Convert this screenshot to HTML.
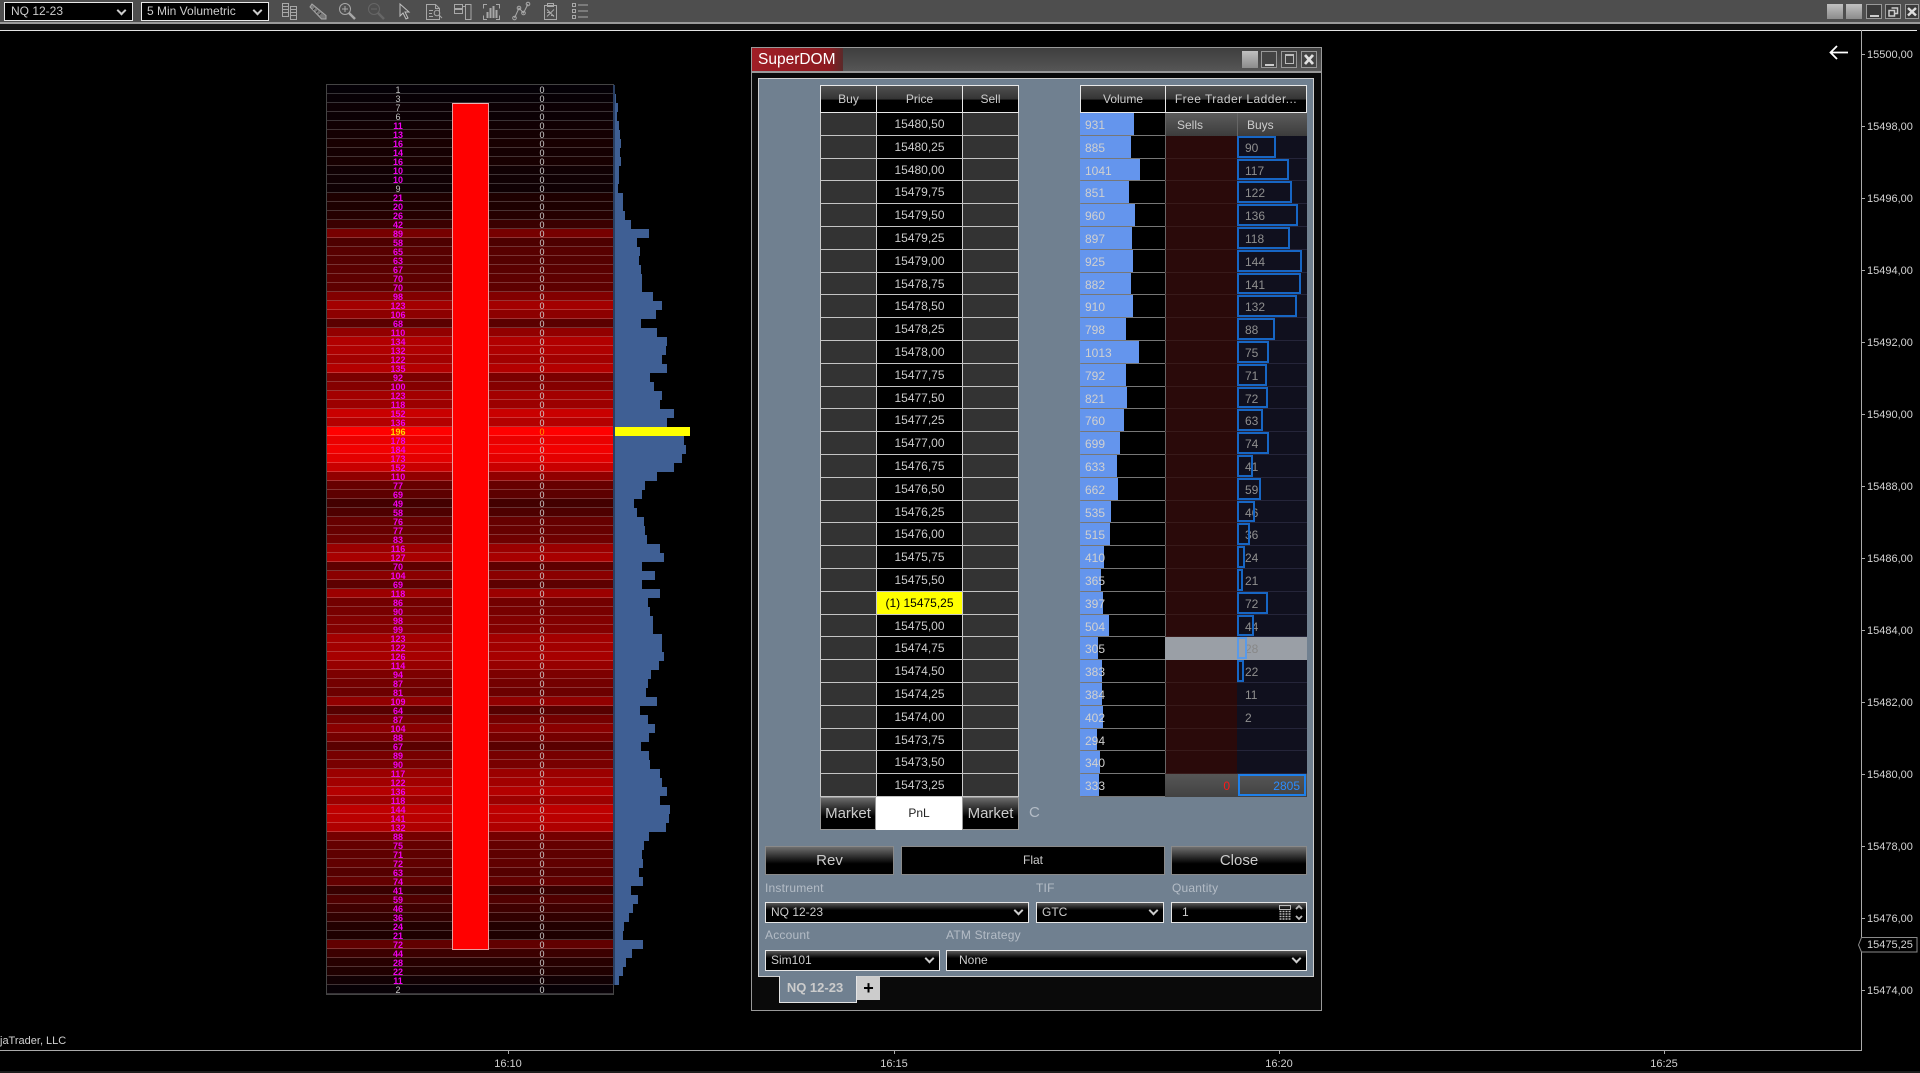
<!DOCTYPE html>
<html><head><meta charset="utf-8"><title>SuperDOM</title>
<style>
html,body{margin:0;padding:0;background:#000;width:1920px;height:1073px;overflow:hidden;font-family:"Liberation Sans",sans-serif;color:#ccc}
.a{position:absolute}
#bar{left:0;top:0;width:1920px;height:22px;background:#4e4e4e;border-bottom:2px solid #9a9a9a}
#sub{left:0;top:24px;width:1920px;height:6px;background:#141414}
.dd{position:absolute;background:#000;border:1px solid #e8e8e8;box-sizing:border-box;font-size:12px;line-height:17px;padding-left:6px;color:#ccc;white-space:nowrap}
.dd:after,.sel:after{content:"";position:absolute;width:5px;height:5px;border-right:2px solid #ccc;border-bottom:2px solid #ccc;transform:rotate(45deg);right:7px;top:4px}
.tb{position:absolute;box-sizing:border-box;background:linear-gradient(#c0c0c0,#8c8c8c);top:4px;width:16px;height:15px}
.tk{position:absolute;box-sizing:border-box;border:1px solid #999;background:#3a3a3a;top:4px;width:16px;height:15px}
.yl{position:absolute;left:1867px;font-size:11px;line-height:14px;color:#d4d4d4;white-space:nowrap}
.yt{position:absolute;left:1861px;width:4px;height:1px;background:#aaa}
.xl{position:absolute;top:1057px;width:60px;text-align:center;font-size:11px;line-height:14px;color:#d0d0d0}
.xt{position:absolute;top:1050px;width:1px;height:4px;background:#aaa}
/* heat table */
#heat{left:327px;top:85px;width:286px;outline:1px solid #444}
#heat p{margin:0;position:relative;height:9px;box-sizing:border-box;border-bottom:1px solid rgba(255,255,255,.2);background:rgb(calc(var(--v)*1.3 + 3),0,calc(6 - var(--v)*.3));font-size:9px;line-height:9px}
#heat b,#heat i{position:absolute;font-style:normal;text-align:center;top:1px}
#heat b{left:0;width:142px;color:#f000f0}
#heat .g b{color:#c4c4c4;font-weight:normal}
#heat i{left:200px;width:30px;color:#d0d0d0;font-weight:normal}
#heat u{position:absolute;left:286px;top:0;height:9px;box-sizing:border-box;width:calc(var(--v)*.385px + 2px);background:#3f5f94;border-left:2px solid #2a3f62;text-decoration:none}
#redcol{left:452px;top:103px;width:37px;height:847px;box-sizing:border-box;background:#f00;border:1px solid #e8a0a0;border-top-color:#f0b0b0}
/* window */
#win{left:751px;top:47px;width:571px;height:964px;box-sizing:border-box;border:1px solid #999;background:#0a0a0a}
#tit{left:752px;top:48px;width:569px;height:23px;background:linear-gradient(#3e3e3e,#565656);border-bottom:2px solid #9a9a9a;box-sizing:content-box}
#red{left:752px;top:48px;width:91px;height:23px;background:linear-gradient(90deg,#a01e26,#8c1a20 85%,#5a2a2a);color:#fff;font-size:15.5px;line-height:23px;padding-left:6px;box-sizing:border-box}
#panel{left:758px;top:78px;width:556px;height:899px;box-sizing:border-box;background:#708090;border:1px solid #d0d0d0}
.hd{position:absolute;top:85px;height:28px;box-sizing:border-box;border:1px solid #e8e8e8;border-right:0;background:linear-gradient(#505050,#333 52%,#000 53%);font-size:12px;line-height:27px;text-align:center;color:#ccc;white-space:nowrap}
#lad{left:820px;top:113px;width:199px}
#lad div{height:22.8px;position:relative;box-sizing:border-box;border-bottom:1px solid #c4c4c4;background:#333;border-left:1px solid #ccc;border-right:1px solid #ccc}
#lad div b{position:absolute;left:55px;width:85px;top:0;bottom:0;background:#000;border-left:1px solid #ccc;border-right:1px solid #ccc;box-sizing:content-box;text-align:center;font-weight:normal;font-size:12px;line-height:23px;color:#ccc}
#lad div.y b{background:#ff0;color:#000}
.mk{position:absolute;top:797px;height:33px;box-sizing:border-box;border:1px solid #999;background:linear-gradient(#6a6a6a,#000 60%);font-size:15px;line-height:31px;text-align:center;color:#ccc}
#rl{left:1080px;top:113px;width:227px}
.v{position:relative;height:22.8px}
.v>u{position:absolute;left:0;top:0;bottom:1px;width:calc(var(--v)*.0578px);background:#6495ed;text-decoration:none}
.v>a{position:absolute;left:5px;top:0;font-size:12px;line-height:25px;color:#d0d0d0;width:40px}
.v:before{content:"";position:absolute;left:0;top:0;width:85px;height:100%;background:#000;box-sizing:border-box;border-bottom:1px solid #777;border-left:1px solid #888}
.v>em{position:absolute;top:0;bottom:0;font-style:normal;font-size:12px;line-height:25px;box-sizing:border-box}
.v>em.s{left:85px;width:72px;background:#2a0a0a;border-left:1px solid #666;border-bottom:1px solid #381a1a}
.v>em.b{left:157px;width:70px;background:#10101e;border-bottom:1px solid #25253a;color:#8f8f8f;padding-left:8px}
.v>em span{position:absolute;left:0;top:0;height:21.8px;box-sizing:border-box;border:2px solid #1766c4;width:calc((var(--w) - 8)*.48px)}
.v>em.h{background:linear-gradient(#5c5c5c,#3c3c3c);color:#ccc;border:0;border-left:1px solid #666;padding-left:11px;line-height:24px}
.v>em.t{background:linear-gradient(#565656,#424242);border:0;text-align:right;padding:0 7px}
.v>em.gy{background:#9a9fa6;border:0;color:#888}
.btn{position:absolute;top:846px;height:29px;box-sizing:border-box;border:1px solid #8a8a8a;background:linear-gradient(#6e6e6e,#000 62%);font-size:15px;line-height:27px;text-align:center;color:#ccc}
.lb{position:absolute;font-size:12px;line-height:14px;color:#b4bcc6;letter-spacing:.2px;white-space:nowrap}
.sel{position:absolute;box-sizing:border-box;height:21px;border:1px solid #e6e6e6;background:linear-gradient(#5a5a5a,#000 38%);font-size:12px;line-height:19px;padding-left:5px;color:#ccc;white-space:nowrap}
.sel:after{top:4px;right:6px}
</style></head><body>

<div class="a" id="bar"></div>
<div class="a" id="sub"></div>
<div class="a" style="left:0;top:30px;width:1917px;height:1px;background:#e4e4e4"></div>
<div class="dd" style="left:4px;top:2px;width:129px;height:19px">NQ 12-23</div>
<div class="dd" style="left:141px;top:2px;width:128px;height:19px;padding-left:5px">5 Min Volumetric</div>

<svg class="a" style="left:0;top:0" width="600" height="23" fill="none" stroke="#a8a8a8" stroke-width="1">
<path d="M282.500 3.500h6v13h-6zM282.500 6.500h6M282.500 9.500h6M282.500 12.500h6M290.500 6.500h6v13h-6zM290.500 9.500h6M290.500 12.500h6M290.500 15.500h6"/>
<path d="M312 4l14 11.500v3.500h-4.500L310 7z" fill="#777"/><path d="M315 8l-2 2M318 10.500l-2 2M321 13l-2 2" stroke="#333"/>
<circle cx="345" cy="9" r="5.5"/><path d="M342 9h6M345 6v6"/><path d="M349 13l6 6" stroke-width="2.5"/>
<g stroke="#666"><circle cx="374" cy="9" r="5.5"/><path d="M371 9h6"/><path d="M378 13l6 6" stroke-width="2.5"/></g>
<path d="M400 4v12l3-3 3 6 2-1-3-6h4z" stroke="#c0c0c0"/>
<path d="M426.500 4.500h9l4 4v11h-13zM435.500 4.500v4h4M429 10.500h4M429 13.500h3M429 16.500h4"/><circle cx="437" cy="13" r="2.800"/><path d="M439 15l3 3"/>
<path d="M454.500 4.500h8v4h-8zM454.500 9.500h8v4h-8zM462.500 6.500h3M465.500 4.500h5.500v15h-5.500z"/>
<path d="M487 4.500h-3.500v4M496 4.500h3.500v4M487 19.500h-3.500v-4M496 19.500h3.500v-4"/><path d="M487.500 12v6M490.500 8v10M493.500 6v12M496.500 10v8" stroke-width="2"/>
<path d="M514.500 18l4.500-10 4.500 5 4.500-9"/><circle cx="514.500" cy="18" r="1.800"/><circle cx="519" cy="8" r="1.800"/><circle cx="523.500" cy="13" r="1.800"/><circle cx="528" cy="4" r="1.800"/>
<path d="M544.500 5.500h12v14h-12zM547.500 3.500h6v3h-6zM547 9.500l7 7M554 9.500l-7 7M547 12.500h3M551 15.500h3"/>
<path d="M572.500 3.500h3v3h-3zM572.500 9.500h3v3h-3zM572.500 15.500h3v3h-3zM578 5h10M578 11h10M578 17h10"/>
</svg>

<div class="tb" style="left:1827px"></div>
<div class="tb" style="left:1846px"></div>
<div class="tk" style="left:1866px"><div class="a" style="left:3px;top:10px;width:9px;height:2px;background:#ccc"></div></div>
<div class="tk" style="left:1885px"><svg class="a" style="left:0;top:0" width="14" height="13" fill="none" stroke="#ccc" stroke-width="1.500"><path d="M5.500 3h6v5.500h-3M3 5.500h5.500v5.500H3z"/></svg></div>
<div class="tk" style="left:1905px;width:14px"><svg class="a" style="left:0;top:0" width="12" height="13" fill="none" stroke="#ddd" stroke-width="2.500"><path d="M2 3l8 7.500M10 3l-8 7.500"/></svg></div>

<!-- axes -->
<div class="a" style="left:1861px;top:30px;width:1px;height:1021px;background:#aaa"></div>
<div class="a" style="left:0;top:1050px;width:1862px;height:1px;background:#aaa"></div>
<div class="a" style="left:0;top:1071px;width:1920px;height:2px;background:#1c1c1c"></div>
<svg class="a" style="left:1825px;top:42px" width="28" height="22" fill="none" stroke="#fff" stroke-width="1.800"><path d="M23 10.500H5.500M12 4l-6.500 6.500L12 17"/></svg>

<div class="yt" style="top:54px"></div><div class="yl" style="top:48px">15500,00</div>
<div class="yt" style="top:126px"></div><div class="yl" style="top:120px">15498,00</div>
<div class="yt" style="top:198px"></div><div class="yl" style="top:192px">15496,00</div>
<div class="yt" style="top:270px"></div><div class="yl" style="top:264px">15494,00</div>
<div class="yt" style="top:342px"></div><div class="yl" style="top:336px">15492,00</div>
<div class="yt" style="top:414px"></div><div class="yl" style="top:408px">15490,00</div>
<div class="yt" style="top:486px"></div><div class="yl" style="top:480px">15488,00</div>
<div class="yt" style="top:558px"></div><div class="yl" style="top:552px">15486,00</div>
<div class="yt" style="top:630px"></div><div class="yl" style="top:624px">15484,00</div>
<div class="yt" style="top:702px"></div><div class="yl" style="top:696px">15482,00</div>
<div class="yt" style="top:774px"></div><div class="yl" style="top:768px">15480,00</div>
<div class="yt" style="top:846px"></div><div class="yl" style="top:840px">15478,00</div>
<div class="yt" style="top:918px"></div><div class="yl" style="top:912px">15476,00</div>
<div class="yt" style="top:990px"></div><div class="yl" style="top:984px">15474,00</div>
<svg class="a" style="left:1856px;top:935px" width="64" height="20" fill="#000" stroke="#8a8a8a"><path d="M2.500 10L5.500 2.500H61V17H5.500z"/></svg>
<div class="yl" style="top:938px">15475,25</div>

<div class="xt" style="left:508px"></div><div class="xl" style="left:478px">16:10</div>
<div class="xt" style="left:894px"></div><div class="xl" style="left:864px">16:15</div>
<div class="xt" style="left:1279px"></div><div class="xl" style="left:1249px">16:20</div>
<div class="xt" style="left:1664px"></div><div class="xl" style="left:1634px">16:25</div>
<div class="a" style="left:0;top:1034px;font-size:11px;line-height:14px;color:#d0d0d0">jaTrader, LLC</div>

<!-- volumetric table -->
<div class="a" id="heat">
<p class="g" style="--v:1"><b>1</b><i>0</i><u></u></p>
<p class="g" style="--v:3"><b>3</b><i>0</i><u></u></p>
<p class="g" style="--v:7"><b>7</b><i>0</i><u></u></p>
<p class="g" style="--v:6"><b>6</b><i>0</i><u></u></p>
<p style="--v:11"><b>11</b><i>0</i><u></u></p>
<p style="--v:13"><b>13</b><i>0</i><u></u></p>
<p style="--v:16"><b>16</b><i>0</i><u></u></p>
<p style="--v:14"><b>14</b><i>0</i><u></u></p>
<p style="--v:16"><b>16</b><i>0</i><u></u></p>
<p style="--v:10"><b>10</b><i>0</i><u></u></p>
<p style="--v:10"><b>10</b><i>0</i><u></u></p>
<p class="g" style="--v:9"><b>9</b><i>0</i><u></u></p>
<p style="--v:21"><b>21</b><i>0</i><u></u></p>
<p style="--v:20"><b>20</b><i>0</i><u></u></p>
<p style="--v:26"><b>26</b><i>0</i><u></u></p>
<p style="--v:42"><b>42</b><i>0</i><u></u></p>
<p style="--v:89"><b>89</b><i>0</i><u></u></p>
<p style="--v:58"><b>58</b><i>0</i><u></u></p>
<p style="--v:65"><b>65</b><i>0</i><u></u></p>
<p style="--v:63"><b>63</b><i>0</i><u></u></p>
<p style="--v:67"><b>67</b><i>0</i><u></u></p>
<p style="--v:70"><b>70</b><i>0</i><u></u></p>
<p style="--v:70"><b>70</b><i>0</i><u></u></p>
<p style="--v:98"><b>98</b><i>0</i><u></u></p>
<p style="--v:123"><b>123</b><i>0</i><u></u></p>
<p style="--v:106"><b>106</b><i>0</i><u></u></p>
<p style="--v:68"><b>68</b><i>0</i><u></u></p>
<p style="--v:110"><b>110</b><i>0</i><u></u></p>
<p style="--v:134"><b>134</b><i>0</i><u></u></p>
<p style="--v:132"><b>132</b><i>0</i><u></u></p>
<p style="--v:122"><b>122</b><i>0</i><u></u></p>
<p style="--v:135"><b>135</b><i>0</i><u></u></p>
<p style="--v:92"><b>92</b><i>0</i><u></u></p>
<p style="--v:100"><b>100</b><i>0</i><u></u></p>
<p style="--v:123"><b>123</b><i>0</i><u></u></p>
<p style="--v:118"><b>118</b><i>0</i><u></u></p>
<p style="--v:152"><b>152</b><i>0</i><u></u></p>
<p style="--v:136"><b>136</b><i>0</i><u></u></p>
<p style="--v:196"><b style="color:#ffd800">196</b><i style="color:#ffa000">0</i><u style="background:#ff0"></u></p>
<p style="--v:178"><b>178</b><i>0</i><u></u></p>
<p style="--v:184"><b>184</b><i>0</i><u></u></p>
<p style="--v:173"><b>173</b><i>0</i><u></u></p>
<p style="--v:152"><b>152</b><i>0</i><u></u></p>
<p style="--v:110"><b>110</b><i>0</i><u></u></p>
<p style="--v:77"><b>77</b><i>0</i><u></u></p>
<p style="--v:69"><b>69</b><i>0</i><u></u></p>
<p style="--v:49"><b>49</b><i>0</i><u></u></p>
<p style="--v:58"><b>58</b><i>0</i><u></u></p>
<p style="--v:76"><b>76</b><i>0</i><u></u></p>
<p style="--v:77"><b>77</b><i>0</i><u></u></p>
<p style="--v:83"><b>83</b><i>0</i><u></u></p>
<p style="--v:116"><b>116</b><i>0</i><u></u></p>
<p style="--v:127"><b>127</b><i>0</i><u></u></p>
<p style="--v:70"><b>70</b><i>0</i><u></u></p>
<p style="--v:104"><b>104</b><i>0</i><u></u></p>
<p style="--v:69"><b>69</b><i>0</i><u></u></p>
<p style="--v:118"><b>118</b><i>0</i><u></u></p>
<p style="--v:86"><b>86</b><i>0</i><u></u></p>
<p style="--v:90"><b>90</b><i>0</i><u></u></p>
<p style="--v:98"><b>98</b><i>0</i><u></u></p>
<p style="--v:99"><b>99</b><i>0</i><u></u></p>
<p style="--v:123"><b>123</b><i>0</i><u></u></p>
<p style="--v:122"><b>122</b><i>0</i><u></u></p>
<p style="--v:126"><b>126</b><i>0</i><u></u></p>
<p style="--v:114"><b>114</b><i>0</i><u></u></p>
<p style="--v:94"><b>94</b><i>0</i><u></u></p>
<p style="--v:87"><b>87</b><i>0</i><u></u></p>
<p style="--v:81"><b>81</b><i>0</i><u></u></p>
<p style="--v:109"><b>109</b><i>0</i><u></u></p>
<p style="--v:64"><b>64</b><i>0</i><u></u></p>
<p style="--v:87"><b>87</b><i>0</i><u></u></p>
<p style="--v:104"><b>104</b><i>0</i><u></u></p>
<p style="--v:88"><b>88</b><i>0</i><u></u></p>
<p style="--v:67"><b>67</b><i>0</i><u></u></p>
<p style="--v:89"><b>89</b><i>0</i><u></u></p>
<p style="--v:90"><b>90</b><i>0</i><u></u></p>
<p style="--v:117"><b>117</b><i>0</i><u></u></p>
<p style="--v:122"><b>122</b><i>0</i><u></u></p>
<p style="--v:136"><b>136</b><i>0</i><u></u></p>
<p style="--v:118"><b>118</b><i>0</i><u></u></p>
<p style="--v:144"><b>144</b><i>0</i><u></u></p>
<p style="--v:141"><b>141</b><i>0</i><u></u></p>
<p style="--v:132"><b>132</b><i>0</i><u></u></p>
<p style="--v:88"><b>88</b><i>0</i><u></u></p>
<p style="--v:75"><b>75</b><i>0</i><u></u></p>
<p style="--v:71"><b>71</b><i>0</i><u></u></p>
<p style="--v:72"><b>72</b><i>0</i><u></u></p>
<p style="--v:63"><b>63</b><i>0</i><u></u></p>
<p style="--v:74"><b>74</b><i>0</i><u></u></p>
<p style="--v:41"><b>41</b><i>0</i><u></u></p>
<p style="--v:59"><b>59</b><i>0</i><u></u></p>
<p style="--v:46"><b>46</b><i>0</i><u></u></p>
<p style="--v:36"><b>36</b><i>0</i><u></u></p>
<p style="--v:24"><b>24</b><i>0</i><u></u></p>
<p style="--v:21"><b>21</b><i>0</i><u></u></p>
<p style="--v:72"><b>72</b><i>0</i><u></u></p>
<p style="--v:44"><b>44</b><i>0</i><u></u></p>
<p style="--v:28"><b>28</b><i>0</i><u></u></p>
<p style="--v:22"><b>22</b><i>0</i><u></u></p>
<p style="--v:11"><b>11</b><i>0</i><u></u></p>
<p class="g" style="--v:2"><b>2</b><i>0</i></p>
</div>
<div class="a" id="redcol"></div>

<!-- SuperDOM window -->
<div class="a" id="win"></div>
<div class="a" id="tit"></div>
<div class="a" id="red">SuperDOM</div>
<div class="tb a" style="left:1242px;top:51px;height:17px"></div>
<div class="tk" style="left:1261px;top:51px;height:17px;background:#444"><div class="a" style="left:3px;top:12px;width:9px;height:2px;background:#ccc"></div></div>
<div class="tk" style="left:1281px;top:51px;height:17px;background:#444"><div class="a" style="left:3px;top:2px;width:9px;height:10px;box-sizing:border-box;border:1px solid #bbb;border-top-width:2px"></div></div>
<div class="tk" style="left:1301px;top:51px;height:17px;background:#444"><svg class="a" style="left:0;top:0" width="14" height="15" fill="none" stroke="#e0e0e0" stroke-width="2.800"><path d="M3 3l8 9M11 3l-8 9"/></svg></div>

<div class="a" id="panel"></div>

<div class="hd" style="left:820px;width:56px">Buy</div>
<div class="hd" style="left:876px;width:86px">Price</div>
<div class="hd" style="left:962px;width:57px;border-right:1px solid #e8e8e8">Sell</div>
<div class="a" id="lad">
<div><b>15480,50</b></div><div><b>15480,25</b></div><div><b>15480,00</b></div><div><b>15479,75</b></div><div><b>15479,50</b></div>
<div><b>15479,25</b></div><div><b>15479,00</b></div><div><b>15478,75</b></div><div><b>15478,50</b></div><div><b>15478,25</b></div>
<div><b>15478,00</b></div><div><b>15477,75</b></div><div><b>15477,50</b></div><div><b>15477,25</b></div><div><b>15477,00</b></div>
<div><b>15476,75</b></div><div><b>15476,50</b></div><div><b>15476,25</b></div><div><b>15476,00</b></div><div><b>15475,75</b></div>
<div><b>15475,50</b></div><div class="y"><b>(1) 15475,25</b></div><div><b>15475,00</b></div><div><b>15474,75</b></div><div><b>15474,50</b></div>
<div><b>15474,25</b></div><div><b>15474,00</b></div><div><b>15473,75</b></div><div><b>15473,50</b></div><div><b>15473,25</b></div>
</div>
<div class="mk" style="left:820px;width:56px">Market</div>
<div class="a" style="left:876px;top:797px;width:86px;height:33px;background:#fff;color:#222;font-size:12px;line-height:32px;text-align:center">PnL</div>
<div class="mk" style="left:962px;width:57px">Market</div>
<div class="a" style="left:1029px;top:805px;font-size:15px;line-height:16px;color:#b4bcc6">C</div>

<div class="hd" style="left:1080px;width:85px">Volume</div>
<div class="hd" style="left:1165px;width:142px;border-right:1px solid #e8e8e8;letter-spacing:.45px">Free Trader Ladder...</div>
<div class="a" id="rl">
<div class="v" style="--v:931"><u></u><a>931</a><em class="s h">Sells</em><em class="b h" style="padding-left:9px">Buys</em></div>
<div class="v" style="--v:885"><u></u><a>885</a><em class="s"></em><em class="b" style="--w:90"><span></span>90</em></div>
<div class="v" style="--v:1041"><u></u><a>1041</a><em class="s"></em><em class="b" style="--w:117"><span></span>117</em></div>
<div class="v" style="--v:851"><u></u><a>851</a><em class="s"></em><em class="b" style="--w:122"><span></span>122</em></div>
<div class="v" style="--v:960"><u></u><a>960</a><em class="s"></em><em class="b" style="--w:136"><span></span>136</em></div>
<div class="v" style="--v:897"><u></u><a>897</a><em class="s"></em><em class="b" style="--w:118"><span></span>118</em></div>
<div class="v" style="--v:925"><u></u><a>925</a><em class="s"></em><em class="b" style="--w:144"><span></span>144</em></div>
<div class="v" style="--v:882"><u></u><a>882</a><em class="s"></em><em class="b" style="--w:141"><span></span>141</em></div>
<div class="v" style="--v:910"><u></u><a>910</a><em class="s"></em><em class="b" style="--w:132"><span></span>132</em></div>
<div class="v" style="--v:798"><u></u><a>798</a><em class="s"></em><em class="b" style="--w:88"><span></span>88</em></div>
<div class="v" style="--v:1013"><u></u><a>1013</a><em class="s"></em><em class="b" style="--w:75"><span></span>75</em></div>
<div class="v" style="--v:792"><u></u><a>792</a><em class="s"></em><em class="b" style="--w:71"><span></span>71</em></div>
<div class="v" style="--v:821"><u></u><a>821</a><em class="s"></em><em class="b" style="--w:72"><span></span>72</em></div>
<div class="v" style="--v:760"><u></u><a>760</a><em class="s"></em><em class="b" style="--w:63"><span></span>63</em></div>
<div class="v" style="--v:699"><u></u><a>699</a><em class="s"></em><em class="b" style="--w:74"><span></span>74</em></div>
<div class="v" style="--v:633"><u></u><a>633</a><em class="s"></em><em class="b" style="--w:41"><span></span>41</em></div>
<div class="v" style="--v:662"><u></u><a>662</a><em class="s"></em><em class="b" style="--w:59"><span></span>59</em></div>
<div class="v" style="--v:535"><u></u><a>535</a><em class="s"></em><em class="b" style="--w:46"><span></span>46</em></div>
<div class="v" style="--v:515"><u></u><a>515</a><em class="s"></em><em class="b" style="--w:36"><span></span>36</em></div>
<div class="v" style="--v:410"><u></u><a>410</a><em class="s"></em><em class="b" style="--w:24"><span></span>24</em></div>
<div class="v" style="--v:365"><u></u><a>365</a><em class="s"></em><em class="b" style="--w:21"><span></span>21</em></div>
<div class="v" style="--v:397"><u></u><a>397</a><em class="s"></em><em class="b" style="--w:72"><span></span>72</em></div>
<div class="v" style="--v:504"><u></u><a>504</a><em class="s"></em><em class="b" style="--w:44"><span></span>44</em></div>
<div class="v" style="--v:305"><u></u><a>305</a><em class="s gy"></em><em class="b gy" style="--w:28;padding-left:8px"><span style="border-color:#5a9ae8"></span>28</em></div>
<div class="v" style="--v:383"><u></u><a>383</a><em class="s"></em><em class="b" style="--w:22"><span></span>22</em></div>
<div class="v" style="--v:384"><u></u><a>384</a><em class="s"></em><em class="b">11</em></div>
<div class="v" style="--v:402"><u></u><a>402</a><em class="s"></em><em class="b">2</em></div>
<div class="v" style="--v:294"><u></u><a>294</a><em class="s"></em><em class="b"></em></div>
<div class="v" style="--v:340"><u></u><a>340</a><em class="s"></em><em class="b"></em></div>
<div class="v" style="--v:333"><u></u><a>333</a><em class="s t" style="color:#ff1818">0</em><em class="b t" style="color:#2a8cff;padding-left:0"><span style="width:68px;left:1px;border-color:#1e80ea"></span>2805</em></div>
</div>

<div class="btn" style="left:765px;width:129px">Rev</div>
<div class="a" style="left:901px;top:846px;width:264px;height:29px;box-sizing:border-box;border:1px solid #8a8a8a;background:#000;font-size:12px;line-height:27px;text-align:center;color:#ccc">Flat</div>
<div class="btn" style="left:1171px;width:136px">Close</div>

<div class="lb" style="left:765px;top:881px">Instrument</div>
<div class="lb" style="left:1036px;top:881px">TIF</div>
<div class="lb" style="left:1172px;top:881px">Quantity</div>
<div class="sel" style="left:765px;top:902px;width:264px">NQ 12-23</div>
<div class="sel" style="left:1036px;top:902px;width:128px">GTC</div>
<div class="a" style="left:1171px;top:902px;width:136px;height:21px;box-sizing:border-box;border:1px solid #e6e6e6;background:linear-gradient(#5a5a5a,#000 38%);font-size:12px;line-height:19px;padding-left:10px;color:#ccc">1</div>
<svg class="a" style="left:1278px;top:904px" width="28" height="17" fill="none" stroke="#bbb"><path d="M1.500 1.500h11v4h-11z"/><path d="M1.500 7.500h11M1.500 10h11M1.500 12.500h11M1.500 15h11" stroke-dasharray="2 1" stroke-width="1.500"/><path d="M18 5l3-3 3 3M18 12l3 3 3-3" stroke-width="1.800"/></svg>

<div class="lb" style="left:765px;top:928px">Account</div>
<div class="lb" style="left:946px;top:928px">ATM Strategy</div>
<div class="sel" style="left:765px;top:950px;width:175px">Sim101</div>
<div class="sel" style="left:946px;top:950px;width:361px;padding-left:12px">None</div>

<div class="a" style="left:779px;top:976px;width:78px;height:27px;box-sizing:border-box;background:#708090;border:1px solid #e4e4e4;border-top:0;font-size:13px;font-weight:bold;line-height:24px;text-align:center;padding-right:6px;color:#ccc">NQ 12-23</div>
<div class="a" style="left:857px;top:977px;width:23px;height:23px;background:#ccc;color:#000;font-size:18px;font-weight:bold;line-height:22px;text-align:center">+</div>

</body></html>
